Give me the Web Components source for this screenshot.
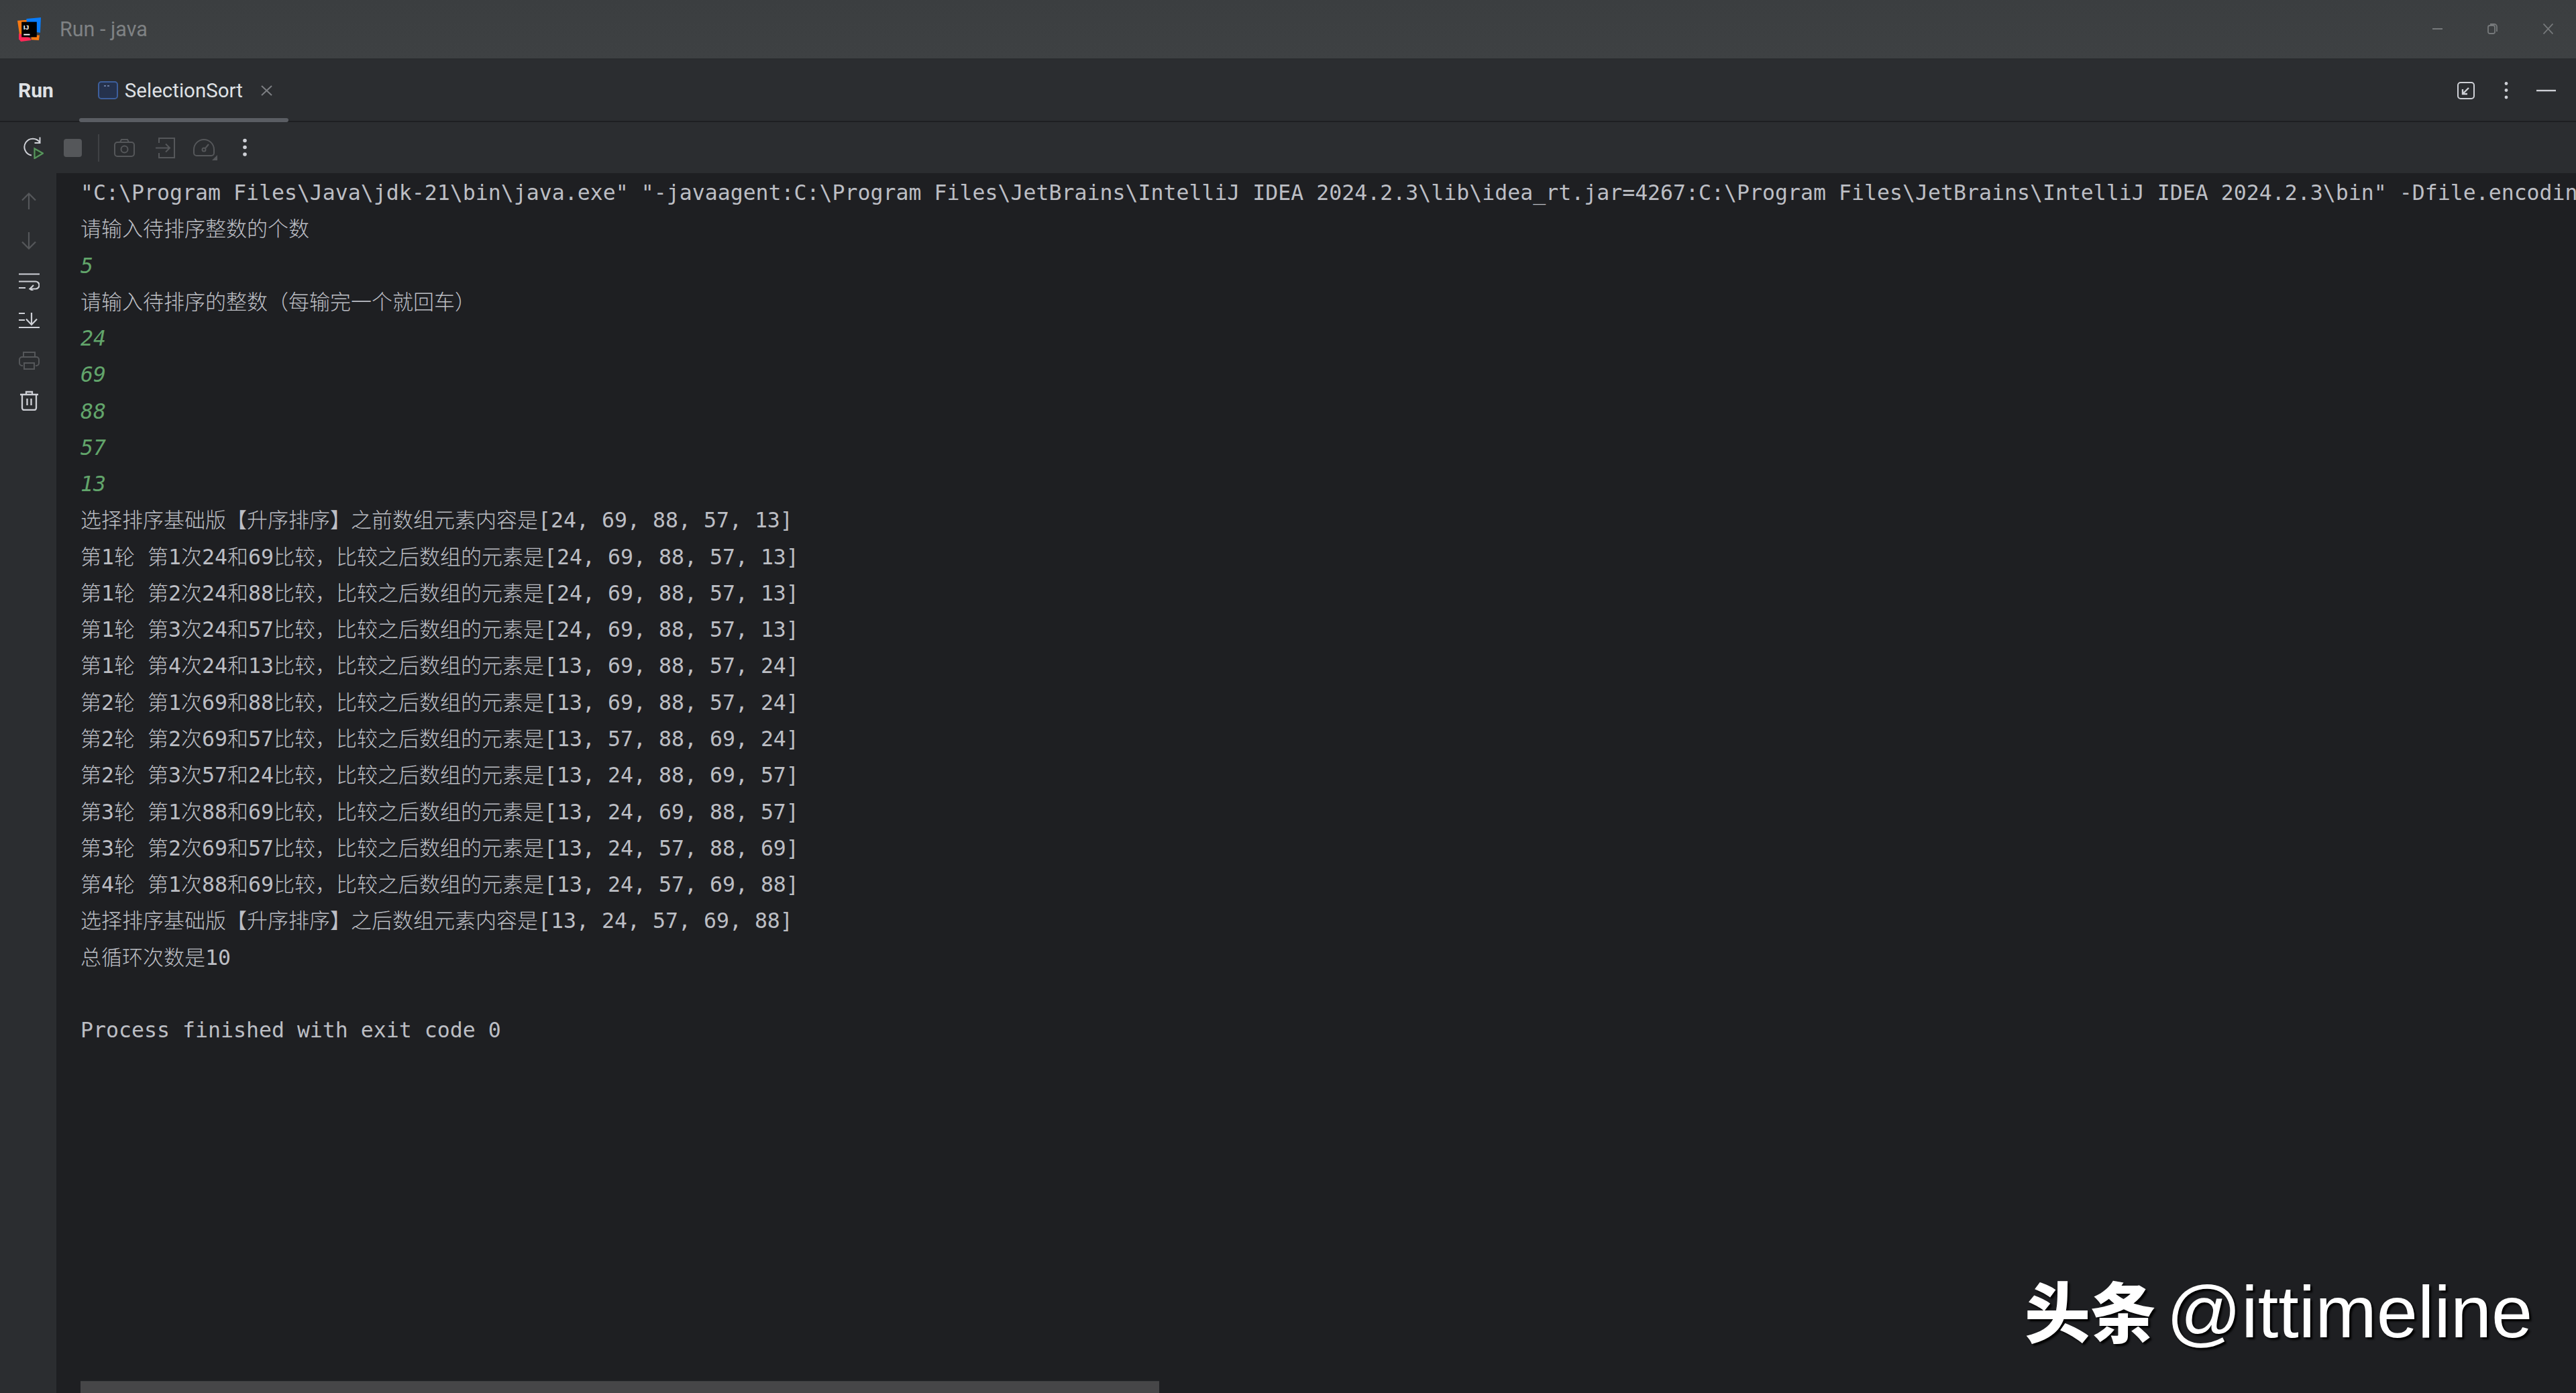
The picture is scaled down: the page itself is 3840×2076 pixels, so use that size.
<!DOCTYPE html>
<html><head><meta charset="utf-8"><style>
html,body{margin:0;height:100%;background:#1e1f22;overflow:hidden}
ide-window{display:flex;flex-direction:column;width:3840px;height:2076px;position:relative}
</style></head><body>
<ide-window>
<ide-titlebar></ide-titlebar>
<run-tabs></run-tabs>
<run-toolbar></run-toolbar>
<console-panel></console-panel>
<water-mark></water-mark>
</ide-window>
<script>
function def(name,html){customElements.define(name,class extends HTMLElement{constructor(){super();this.attachShadow({mode:'open'}).innerHTML=html;}});}
const dots=(c,r)=>`<circle cx="4" cy="3.5" r="${r}" fill="${c}"/><circle cx="4" cy="13.500" r="${r}" fill="${c}"/><circle cx="4" cy="24" r="${r}" fill="${c}"/>`;
def('ide-titlebar',`<style>
:host{display:flex;align-items:center;flex:none;height:89px;box-sizing:border-box;padding:0 34px 0 26px;background:linear-gradient(#3b3e40,#3e4143);border-bottom:2px solid #2a2c2e;color:#7f8284;font:30.5px 'Roboto',sans-serif}
.t{margin-left:28px;margin-top:-1px}
.s{flex:1}
svg{display:block;flex:none}
</style>
<svg width="35" height="36" viewBox="0 0 34 38" preserveAspectRatio="none"><path d="M0 5l14-1v6L5 30 3 27z" fill="#f97a12"/><path d="M13 2l21-2-1 24-19-3z" fill="#087cfa"/><path d="M2 25l16 7 2 4-15 2-3-4z" fill="#fe2857"/><path d="M20 28h12l-1 8-11-1z" fill="#f97a12"/><rect x="6" y="7" width="22" height="24" fill="#000"/><rect x="9" y="26" width="9" height="2" fill="#fff"/><text x="8.500" y="19" font-family="Liberation Sans" font-size="10" font-weight="700" fill="#fff">IJ</text></svg>
<span class="t">Run - java</span><span class="s"></span>
<svg width="15" height="16" viewBox="0 0 15 16" style="margin-top:-2px"><path d="M0 8h15" stroke="#76797b" stroke-width="2" fill="none"/></svg>
<svg style="margin-left:67px;margin-top:-1px" width="15" height="16" viewBox="0 0 15 16"><rect x="1" y="3" width="10" height="12" rx="2.500" stroke="#76797b" stroke-width="1.800" fill="none"/><path d="M4 1h6a4 4 0 0 1 4 4v7" stroke="#76797b" stroke-width="1.800" fill="none"/></svg>
<svg style="margin-left:68px;margin-top:-1px" width="15" height="16" viewBox="0 0 15 16"><path d="M0.500 0.500l14 15M14.500 0.500l-14 15" stroke="#76797b" stroke-width="1.800" fill="none"/></svg>`);
def('run-tabs',`<style>
:host{display:flex;align-items:center;flex:none;height:93px;box-sizing:border-box;padding:0 30px 0 27px;background:#2b2d30;border-bottom:2px solid #1e1f22;color:#dfe1e5;font:29.5px 'Roboto',sans-serif;position:relative}
b{font-weight:700;font-size:30px}
.tab{display:flex;align-items:center;margin-left:66px}
.bar{position:absolute;left:118px;width:312px;bottom:-2px;height:6px;background:#5a5d63;border-radius:3px}
.x{margin-left:27px}
.s{flex:1}
svg{display:block;flex:none}
</style>
<b>Run</b>
<div class="tab"><svg width="30" height="27" viewBox="0 0 30 27"><rect x="1" y="1" width="28" height="25" rx="4" fill="#25324d" stroke="#3d5f9c" stroke-width="2"/><path d="M9 7h3M14 7h3" stroke="#7f94bd" stroke-width="1.500"/></svg><span style="margin-left:10px">SelectionSort</span>
<svg class="x" width="17" height="16" viewBox="0 0 17 16"><path d="M1 1l15 14M16 1L1 15" stroke="#7c7e82" stroke-width="2"/></svg></div>
<div class="bar"></div><span class="s"></span>
<svg width="26" height="26" viewBox="0 0 26 26"><rect x="1" y="1" width="24" height="24" rx="4" fill="none" stroke="#ced0d6" stroke-width="2"/><path d="M17 9l-8 8M8 11v7h7" fill="none" stroke="#ced0d6" stroke-width="2.400"/></svg>
<svg style="margin-left:43px" width="8" height="28" viewBox="0 0 8 28">${dots('#ced0d6',2.4)}</svg>
<svg style="margin-left:41px" width="29" height="4" viewBox="0 0 29 4"><path d="M0 2h29" stroke="#ced0d6" stroke-width="2.400"/></svg>`);
def('run-toolbar',`<style>
:host{display:flex;align-items:center;flex:none;height:76px;box-sizing:border-box;padding:0 0 0 35px;background:#2b2d30}
svg{display:block;flex:none}
</style>
<svg width="30" height="33" viewBox="0 0 30 33"><path d="M12 27.500A12.500 12.500 0 1 1 24.500 8.500M24.500 0.500v8.500h-8" fill="none" stroke="#ced0d6" stroke-width="2"/><path d="M16.500 17.500L29 24.500 16.500 32z" fill="#253627" stroke="#57965c" stroke-width="2.200"/></svg>
<svg style="margin-left:30px" width="27" height="27" viewBox="0 0 27 27"><rect width="27" height="27" rx="4" fill="#55575a"/></svg>
<svg style="margin-left:24px;margin-top:0" width="2" height="41" viewBox="0 0 2 41"><rect width="2" height="41" fill="#3f4144"/></svg>
<svg style="margin-left:22px" width="31" height="27" viewBox="0 0 31 27"><rect x="1" y="5" width="29" height="21" rx="4" fill="none" stroke="#55575a" stroke-width="2"/><path d="M9 5l2-4h9l2 4" fill="none" stroke="#55575a" stroke-width="2"/><circle cx="15.500" cy="15.500" r="5" fill="none" stroke="#55575a" stroke-width="2"/></svg>
<svg style="margin-left:31px" width="29" height="31" viewBox="0 0 29 31"><path d="M5 8V1h23v29H5v-7M0 15.500h21M15 9.500l6 6-6 6" fill="none" stroke="#55575a" stroke-width="2"/></svg>
<svg style="margin-left:27px;margin-top:5px" width="36" height="32" viewBox="0 0 36 32"><path d="M5 25a4 4 0 0 1-4-4v-5a15 15 0 0 1 30 0v5a4 4 0 0 1-4 4z" fill="none" stroke="#55575a" stroke-width="2"/><circle cx="16" cy="16" r="2.500" fill="none" stroke="#55575a" stroke-width="2"/><path d="M18 14l5-6" stroke="#55575a" stroke-width="2"/><path d="M36 24v8h-8z" fill="#55575a"/></svg>
<svg style="margin-left:37px" width="8" height="28" viewBox="0 0 8 28">${dots('#ced0d6',2.8)}</svg>`);
def('side-rail',`<style>
:host{display:flex;flex-direction:column;align-items:center;flex:none;width:84px;background:#2b2d30;box-sizing:border-box;padding:29px 0 0 2px}
svg{display:block;flex:none}
</style>
<svg width="22" height="25" viewBox="0 0 22 25"><path d="M11 25V1.500M1 11.500L11 1.500l10 10" fill="none" stroke="#55575a" stroke-width="2.200"/></svg>
<svg style="margin-top:34px" width="22" height="26" viewBox="0 0 22 26"><path d="M11 0v24M1 14.500l10 10 10-10" fill="none" stroke="#55575a" stroke-width="2.200"/></svg>
<svg style="margin-top:35px" width="31" height="26" viewBox="0 0 31 26"><path d="M0 1.500h31M0 12.500h25a5.500 5.500 0 0 1 0 11H17M22 18l-5.500 5.500L22 27M0 22h10" fill="none" stroke="#ced0d6" stroke-width="2.200"/></svg>
<svg style="margin-top:33px" width="31" height="23" viewBox="0 0 31 23"><path d="M0 1h9M0 11h9M0 22h31M19 0v18M11 9.500l8 8.500 8-8.500" fill="none" stroke="#ced0d6" stroke-width="2.200"/></svg>
<svg style="margin-top:35px" width="31" height="27" viewBox="0 0 31 27"><path d="M7 8V1h17v7M6 21H5a4 4 0 0 1-4-4v-5a4 4 0 0 1 4-4h21a4 4 0 0 1 4 4v5a4 4 0 0 1-4 4h-1" fill="none" stroke="#55575a" stroke-width="2"/><rect x="8" y="17" width="15" height="9" fill="none" stroke="#55575a" stroke-width="2"/></svg>
<svg style="margin-top:31px" width="27" height="30" viewBox="0 0 27 30"><path d="M0 6h27M9 6V2h9v4M3 6v20a3 3 0 0 0 3 3h15a3 3 0 0 0 3-3V6M10.500 12v10M16.500 12v10" fill="none" stroke="#ced0d6" stroke-width="2.300"/></svg>`);
def('console-panel',`<style>
:host{display:flex;flex:1;min-height:0;position:relative;overflow:hidden}
.main{flex:1;min-width:0;background:#1e1f22;padding:2px 0 0 36px;position:relative;overflow:hidden}
.bar{position:absolute;left:36px;bottom:0;width:1608px;height:18px;background:#464648;border-top:1px solid #3c3d40;box-sizing:border-box}
</style><side-rail></side-rail><div class="main"><console-text></console-text><div class="bar"></div></div>`);
const head='"C:\\Program Files\\Java\\jdk-21\\bin\\java.exe" "-javaagent:C:\\Program Files\\JetBrains\\IntelliJ IDEA 2024.2.3\\lib\\idea_rt.jar=4267:C:\\Program Files\\JetBrains\\IntelliJ IDEA 2024.2.3\\bin" -Dfile.encoding=UTF-8';
const L=[[head],['请输入待排序整数的个数'],['5',1],['请输入待排序的整数（每输完一个就回车）'],['24',1],['69',1],['88',1],['57',1],['13',1],
['选择排序基础版【升序排序】之前数组元素内容是[24, 69, 88, 57, 13]'],
['第1轮 第1次24和69比较，比较之后数组的元素是[24, 69, 88, 57, 13]'],
['第1轮 第2次24和88比较，比较之后数组的元素是[24, 69, 88, 57, 13]'],
['第1轮 第3次24和57比较，比较之后数组的元素是[24, 69, 88, 57, 13]'],
['第1轮 第4次24和13比较，比较之后数组的元素是[13, 69, 88, 57, 24]'],
['第2轮 第1次69和88比较，比较之后数组的元素是[13, 69, 88, 57, 24]'],
['第2轮 第2次69和57比较，比较之后数组的元素是[13, 57, 88, 69, 24]'],
['第2轮 第3次57和24比较，比较之后数组的元素是[13, 24, 88, 69, 57]'],
['第3轮 第1次88和69比较，比较之后数组的元素是[13, 24, 69, 88, 57]'],
['第3轮 第2次69和57比较，比较之后数组的元素是[13, 24, 57, 88, 69]'],
['第4轮 第1次88和69比较，比较之后数组的元素是[13, 24, 57, 69, 88]'],
['选择排序基础版【升序排序】之后数组元素内容是[13, 24, 57, 69, 88]'],
['总循环次数是10'],['\u00a0'],['Process finished with exit code 0']];
def('console-text',`<style>
:host{display:block;font:31.56px/54.27px "DejaVu Sans Mono","Noto Sans CJK SC",monospace;color:#bcbec4;white-space:pre}
.i{color:#62a56b;font-style:italic}
div{height:54.27px}
span{font:300 31px/0 "Noto Sans CJK SC",sans-serif;color:#bcbec4}
</style>`+L.map(([t,i])=>`<div${i?' class="i"':''}>${t.replace(/[\u3000-\u9fff\uff00-\uffef]+/g,m=>`<span>${m}</span>`)}</div>`).join(''));
def('water-mark',`<style>
:host{position:absolute;left:3018px;top:1890px;color:#fff}
div{font:400 110px/120px "Liberation Sans","Noto Sans CJK SC",sans-serif;white-space:pre;text-shadow:3px 3px 3px #000}
b{font:900 98px/120px "Noto Sans CJK SC",sans-serif;margin-right:-15px}
</style><div><b>头条</b> @ittimeline</div>`);
</script>
</body></html>
